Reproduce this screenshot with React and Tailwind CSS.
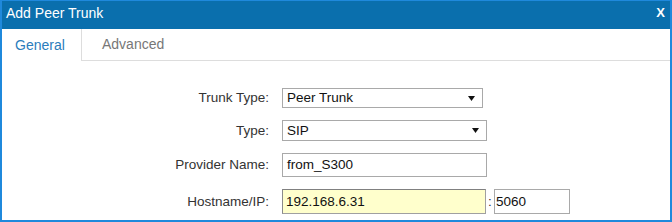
export default function App() {
  const fields = [
    { label: 'Trunk Type:', value: 'Peer Trunk', kind: 'select', width: 'w-[201px]', height: 'h-[20px]' },
    { label: 'Type:', value: 'SIP', kind: 'select', width: 'w-[205px]', height: 'h-[21px]' },
    { label: 'Provider Name:', value: 'from_S300', kind: 'input', width: 'w-[205px]', height: 'h-[24px]' },
  ];

  return (
    <div
      className="w-[672px] h-[222px] bg-white flex flex-col border-x-2 border-b-2 border-t border-[#1f89dc] overflow-hidden"
      style={{ fontFamily: '"Liberation Sans", Arial, sans-serif' }}
    >
      {/* Header */}
      <div className="h-[28px] bg-[#0a6fad] flex items-start justify-between pl-[4px] pr-[5px] pt-[4px]">
        <span className="text-white text-[14px] leading-[16px]">Add Peer Trunk</span>
        <span className="text-white text-[13px] font-bold leading-[16px]">X</span>
      </div>

      {/* Tabs */}
      <div className="flex h-[32px]">
        <div className="w-[80px] border-r border-[#dddddd] flex items-center pl-[13px]">
          <span className="text-[14px] text-[#2b7dbc]">General</span>
        </div>
        <div className="flex-1 border-b border-[#dddddd] flex items-center pl-[20px]">
          <span className="text-[14px] text-[#777777]">Advanced</span>
        </div>
      </div>

      {/* Form */}
      <div className="flex flex-col pt-[27px] gap-[12px] text-[13.5px]">
        {fields.map((f) => (
          <div key={f.label} className="flex items-center">
            <div className="w-[267px] text-right text-[#333333] pr-0">{f.label}</div>
            <div
              className={`ml-[13px] ${f.width} ${f.height} border border-[#a9a9a9] bg-white flex items-center justify-between pl-[4px] pr-[7px] text-[#111111]`}
            >
              <span>{f.value}</span>
              {f.kind === 'select' && (
                <svg width="7" height="5" viewBox="0 0 7 5">
                  <path d="M0 0 L7 0 L3.5 5 Z" fill="#111111" />
                </svg>
              )}
            </div>
          </div>
        ))}

        <div className="flex items-center">
          <div className="w-[267px] text-right text-[#333333]">Hostname/IP:</div>
          <div className="ml-[13px] w-[204px] h-[25px] border border-[#a0a0a0] border-t-[#808080] border-l-[#8a8a8a] bg-[#ffffcc] flex items-center pl-[3px] text-[#111111]">
            192.168.6.31
          </div>
          <span className="w-[8px] text-center text-[#333333]">:</span>
          <div className="w-[76px] h-[25px] border border-[#a9a9a9] bg-white flex items-center pl-[1px] text-[#111111]">
            5060
          </div>
        </div>
      </div>
    </div>
  );
}
